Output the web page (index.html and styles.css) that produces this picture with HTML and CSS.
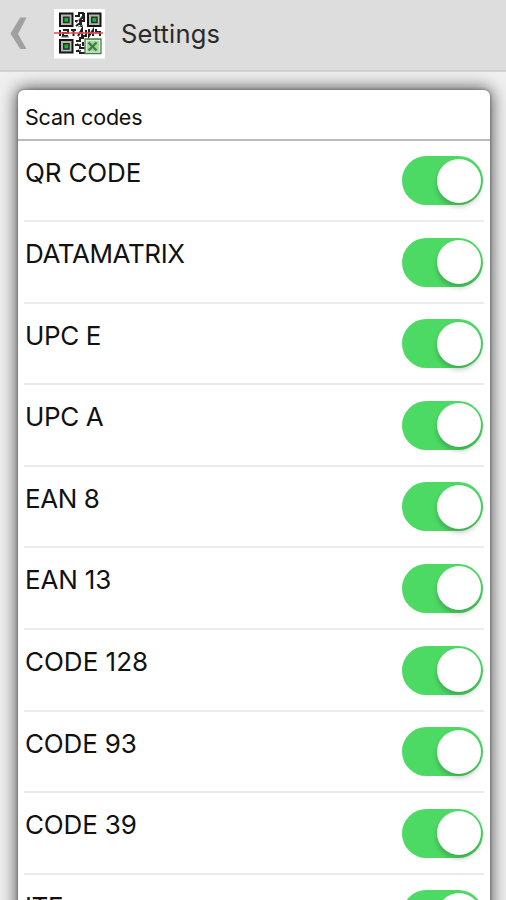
FILE: index.html
```html
<!DOCTYPE html>
<html lang="en">
<head>
<meta charset="utf-8">
<title>Settings</title>
<link rel="stylesheet" href="styles.css">
</head>
<body>
<header class="bar">
  <svg class="back" width="18" height="36" viewBox="0 0 18 36"><path d="M10.200 1.500H16.500L8 18l8.500 15H10.200L0.500 17.500z" fill="#a0a0a0"/></svg>
  <svg class="logo" width="52" height="50" viewBox="0 0 52 50">
    <path fill="#fff" d="M0 0h51v49.500H0z"/>
    <g fill="#b4b8b4" stroke="#151515" stroke-width="2">
      <path d="M6 4.500h12.500v12.500H6zM34 4.500h12.500v12.500H34zM6 31h12.500v12.500H6z"/>
    </g>
    <g fill="#16b52c" stroke="#243326" stroke-width="1.500">
      <path d="M9.700 8.200h5.300v5.300h-5.300zM37.700 8.200h5.300v5.300h-5.300zM9.700 34.700h5.300v5.300h-5.300z"/>
    </g>
    <path fill="none" stroke="#202020" stroke-width="2" d="M21 7h4V4h4v4l-3 3v3l-4 3M30 4v8h-3v6M21 12h3M6 21v6M9 21h5v3H9v3h5M17 21h5M19.500 21v6M24 27l4-7v7h4v-6M35 20v7l4-6v6M42 20v3h4v4M22 32h4v-3h4M21 36h5v3h5M22 42h4v2h5M29 33v4"/>
    <path fill="none" stroke="#777" d="M22 14l6-7M24 18l5-2M7 28h8M26 24h4M37 24h8M23 34l4 3M24 40l3 3"/>
    <path fill="#a9d2a2" stroke="#47824a" stroke-width="1.300" d="M31 30h16v14.500H31z"/>
    <path fill="none" stroke="#dceed7" stroke-width="1.200" d="M32.500 31.500h13v11.500h-13z"/>
    <path fill="none" stroke="#37843c" stroke-width="2.300" d="M34.500 33.500l8 8M42.500 33.500l-8 8"/>
    <path fill="none" stroke="#e94b4b" stroke-width="1.300" d="M0 24h49"/>
  </svg>
  <h1 class="title">Settings</h1>
</header>
<main class="page">
  <section class="card">
    <h2 class="heading">Scan codes</h2>
    <ul class="list">
      <li class="row"><span class="label">QR CODE</span><span class="toggle"></span></li>
      <li class="row"><span class="label tight">DATAMATRIX</span><span class="toggle"></span></li>
      <li class="row"><span class="label tight">UPC E</span><span class="toggle"></span></li>
      <li class="row"><span class="label tight">UPC A</span><span class="toggle"></span></li>
      <li class="row"><span class="label tight">EAN 8</span><span class="toggle"></span></li>
      <li class="row"><span class="label">EAN 13</span><span class="toggle"></span></li>
      <li class="row"><span class="label wide">CODE 128</span><span class="toggle"></span></li>
      <li class="row"><span class="label">CODE 93</span><span class="toggle"></span></li>
      <li class="row"><span class="label">CODE 39</span><span class="toggle"></span></li>
      <li class="row"><span class="label tight">ITF</span><span class="toggle"></span></li>
    </ul>
  </section>
</main>
</body>
</html>
```
FILE: styles.css
```css
* { box-sizing: border-box; }
body {
  display: flex;
  flex-direction: column;
  margin: 0;
  height: 100vh;
  overflow: hidden;
  background: #f0f0f0;
  color: #111;
  font-family: Inter, "Liberation Sans", sans-serif;
}
.bar {
  display: flex;
  flex: none;
  align-items: flex-start;
  height: 72px;
  padding: 9px 0 0 10px;
  background: #ddd;
  border-bottom: 2px solid #d2d2d2;
}
.back { margin-top: 7px; }
.logo { margin-left: 26px; }
.title {
  margin: 9px 0 0 15px;
  font-size: 25.500px;
  line-height: 32px;
  font-weight: 400;
  letter-spacing: .2px;
  color: #2b2b2b;
}
.page {
  flex: 1;
  min-height: 0;
  padding: 17.500px 16.500px 0 18px;
  overflow: hidden;
}
.card {
  height: 870px;
  background: #fff;
  border-radius: 6px;
  box-shadow: 0 0 17px 1px #444, 0 0 3px #777;
}
.heading {
  margin: 0;
  height: 51px;
  padding: 12.500px 7px 0;
  border-bottom: 2px solid #bbb;
  font-size: 21.500px;
  line-height: 30px;
  font-weight: 400;
  letter-spacing: -.2px;
}
.list { margin: 0; padding: 0 6px; list-style: none; }
.row {
  display: flex;
  justify-content: space-between;
  height: 81.600px;
  border-bottom: 2px solid #ebebeb;
}
.label {
  margin: 16px 0 0 1px;
  font-size: 26px;
  font-weight: 370;
  line-height: 32px;
  letter-spacing: -.15px;
}
.label.tight { letter-spacing: -.4px; }
.label.wide { letter-spacing: 0; }
.toggle {
  display: flex;
  justify-content: flex-end;
  width: 81px;
  height: 49px;
  margin: 15.500px .5px 0 0;
  padding: 2.500px;
  border-radius: 25px;
  background: #4cd964;
}
.toggle::after {
  content: "";
  width: 44px;
  height: 44px;
  border-radius: 50%;
  background: #fff;
  box-shadow: 0 4px 5px rgba(0, 0, 0, .2);
}
```
